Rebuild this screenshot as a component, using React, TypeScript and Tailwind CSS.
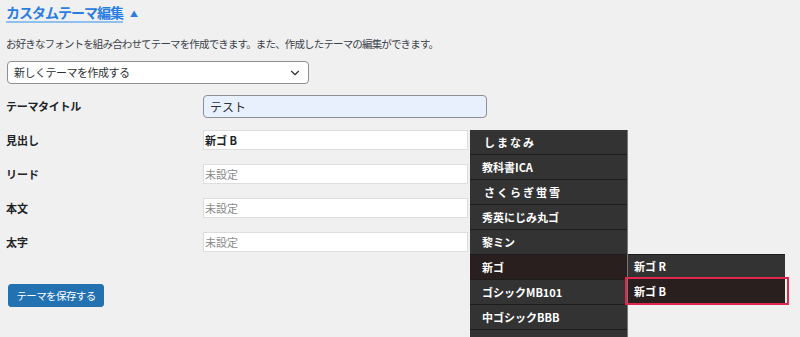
import { ChevronDown } from 'lucide-react';

const fonts = [
  { name: 'しまなみ', wide: true },
  { name: '教科書ICA' },
  { name: 'さくらぎ蛍雪', wide: true },
  { name: '秀英にじみ丸ゴ' },
  { name: '黎ミン' },
  { name: '新ゴ', active: true },
  { name: 'ゴシックMB101' },
  { name: '中ゴシックBBB' },
  { name: '' },
];

const fields = [
  { label: '見出し', value: '新ゴ B' },
  { label: 'リード', value: '' },
  { label: '本文', value: '' },
  { label: '太字', value: '' },
];

function FontMenu() {
  return (
    <div className="absolute left-[470px] top-[130px] w-[158px] border-r border-[#777] bg-[#333]">
      {fonts.map((f, i) => (
        <div
          key={i}
          className={`flex h-[25px] items-center border-b border-[#1c1c1c] text-[11px] font-bold text-white ${
            f.active ? 'bg-[#2a1f1f]' : 'bg-[#333]'
          } ${f.wide ? 'pl-[14px] tracking-[2px]' : 'pl-[12px]'}`}
        >
          {f.name}
        </div>
      ))}
    </div>
  );
}

function SubMenu() {
  return (
    <div className="absolute left-[628px] top-[254px] w-[157px] border-t border-[#1c1c1c] bg-[#333]">
      <div className="flex h-[24px] items-center border-b border-[#1c1c1c] pl-[6px] text-[11px] font-bold text-white">
        新ゴ R
      </div>
      <div className="relative flex h-[25px] items-center bg-[#2a1f1f] pl-[6px] text-[11px] font-bold text-white">
        新ゴ B
        <div className="absolute -bottom-[1px] -left-[3px] -right-[4px] -top-[2px] border-2 border-[#e0284f]" />
      </div>
    </div>
  );
}

export default function App() {
  return (
    <div
      className="relative h-[337px] w-[800px] overflow-hidden bg-[#f0f0f1] text-[#1d2327]"
      style={{ fontFamily: '"Noto Sans CJK JP", "Noto Sans", sans-serif' }}
    >
      <div className="pl-[6px] pt-[4px]">
        <div className="flex items-center gap-[7px]">
          <span className="border-b-2 border-[#8fc1f0] text-[14px] font-bold leading-[17px] tracking-[-1px] text-[#2a7de1]">
            カスタムテーマ編集
          </span>
          <span className="text-[8px] text-[#2a7de1]">▲</span>
        </div>

        <p className="mt-[14px] text-[10.5px] leading-[14px] tracking-[-0.85px] text-[#3c434a]">
          お好きなフォントを組み合わせてテーマを作成できます。また、作成したテーマの編集ができます。
        </p>

        <div className="ml-[1px] mt-[10px] flex h-[23px] w-[302px] items-center justify-between rounded-[4px] border border-[#8c8f94] bg-white pl-[6px] pr-[6px]">
          <span className="text-[11px] tracking-[-0.5px] text-[#2c3338]">新しくテーマを作成する</span>
          <ChevronDown size={14} strokeWidth={2} className="text-[#2c3338]" />
        </div>

        <div className="mt-[11px] grid grid-cols-[197px_1fr] items-center">
          <span className="text-[11px] font-bold tracking-[-0.3px]">テーマタイトル</span>
          <div className="flex h-[23px] w-[284px] items-center rounded-[4px] border border-[#8c8f94] bg-[#e8f0fe] pl-[6px] text-[12px] text-[#2c3338]">
            テスト
          </div>
        </div>

        <div className="mt-[12px] flex flex-col gap-[14px]">
          {fields.map((f) => (
            <div key={f.label} className="grid grid-cols-[197px_1fr] items-center">
              <span className="text-[11px] font-bold">{f.label}</span>
              <div className="flex h-[20px] w-[265px] items-center border border-[#ddd] bg-white pl-[1px] text-[11px]">
                {f.value ? (
                  <span className="font-bold text-[#1d2327]">{f.value}</span>
                ) : (
                  <span className="text-[#8a8a8a]">未設定</span>
                )}
              </div>
            </div>
          ))}
        </div>

        <button
          type="button"
          className="ml-[2px] mt-[32px] flex h-[23px] w-[96px] items-center justify-center rounded-[3px] border border-[#2271b1] bg-[#2271b1] text-[10.5px] tracking-[-0.6px] text-white"
        >
          テーマを保存する
        </button>
      </div>

      <FontMenu />
      <SubMenu />
    </div>
  );
}
